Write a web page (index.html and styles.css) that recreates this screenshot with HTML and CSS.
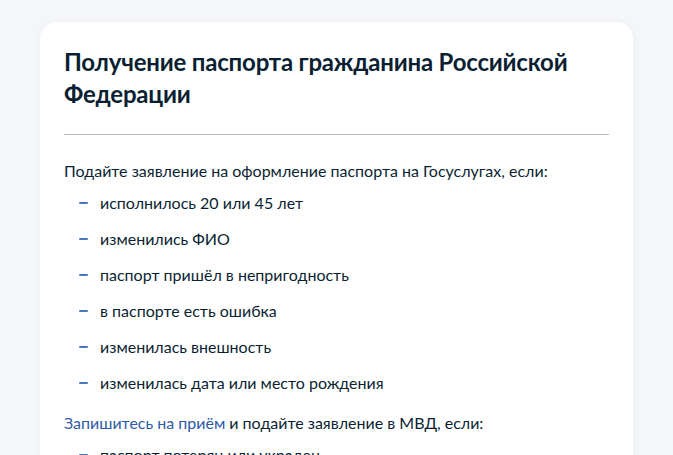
FILE: index.html
```html
<!DOCTYPE html>
<html lang="ru">
<head>
  <meta charset="UTF-8" />
  <meta name="viewport" content="width=device-width, initial-scale=1.0"/>
  <title>Получение паспорта</title>
  <link rel="stylesheet" href="styles.css">
</head>
<body>
  <div class="card">
    <h1 class="card-title">Получение паспорта гражданина Российской Федерации</h1>
    <hr class="divider">

    <p class="lead">Подайте заявление на оформление паспорта на Госуслугах, если:</p>
    <ul class="dash-list">
      <li>исполнилось 20 или 45 лет</li>
      <li>изменились ФИО</li>
      <li>паспорт пришёл в непригодность</li>
      <li>в паспорте есть ошибка</li>
      <li>изменилась внешность</li>
      <li>изменилась дата или место рождения</li>
    </ul>

    <p class="lead lead-gap"><a href="#" class="link">Запишитесь на приём</a> и подайте заявление в МВД, если:</p>
    <ul class="dash-list">
      <li>паспорт потерян или украден</li>
      <li>нужно получить первый паспорт в 14 лет</li>
    </ul>
  </div>
</body>
</html>
```

FILE: styles.css
```css
body {
  margin: 0;
  padding: 22px 40px 0;
  background: #f4f6fa;
  font-family: Lato, "Noto Sans", sans-serif;
  color: #0b1f33;
}

.card {
  width: 593px;
  box-sizing: border-box;
  padding: 24px 24px 32px;
  background: #fff;
  border-radius: 16px;
  box-shadow: 0 1px 6px rgba(30, 60, 110, 0.06);
}

.card-title {
  margin: 0;
  font-size: 24px;
  line-height: 32px;
  font-weight: 700;
  letter-spacing: -0.2px;
}

.divider {
  margin: 24px 0;
  border: none;
  border-top: 1px solid #b2bcc4;
}

.lead {
  margin: 0;
  font-size: 16px;
  line-height: 24px;
}

.lead-gap {
  margin-top: 16px;
}

.link {
  color: #2d5aa6;
  text-decoration: none;
}

.dash-list {
  list-style: none;
  margin: 8px 0 0;
  padding: 0 0 0 36px;
}

.dash-list li {
  position: relative;
  font-size: 16px;
  line-height: 24px;
  margin-bottom: 12px;
}

.dash-list li:last-child {
  margin-bottom: 0;
}

/* синее тире вместо маркера */
.dash-list li::before {
  content: "";
  position: absolute;
  left: -21px;
  top: 11px;
  width: 9px;
  height: 2px;
  border-radius: 1px;
  background: #4a78be;
}
```
